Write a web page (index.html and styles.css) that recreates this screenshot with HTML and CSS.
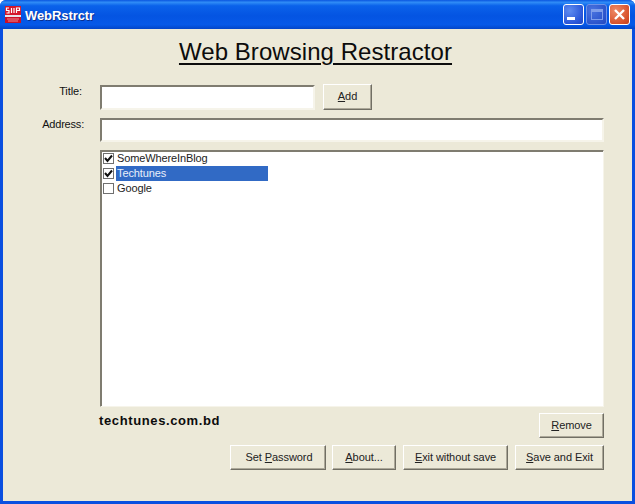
FILE: index.html
```html
<!DOCTYPE html>
<html lang="en">
<head>
<meta charset="utf-8">
<title>WebRstrctr</title>
<link rel="stylesheet" href="styles.css">
</head>
<body>
<div class="window">
  <header class="titlebar">
    <svg class="app-icon" width="16" height="17" viewBox="0 0 16 17">
      <rect x="0" y="0" width="16" height="9" fill="#d4182c"/>
      <rect x="0" y="9" width="16" height="2" fill="#e8e4ea"/>
      <rect x="0" y="11" width="16" height="6" fill="#cc1028"/>
      <path d="M4 2H1.500V4.500H4V7H1.500M6.500 2V7M9 2V7M11.500 7V2H14.500V4.500H11.500" stroke="#fff" stroke-width="1.200" fill="none"/>
      <path d="M2 13h12M3 15h10" stroke="#f08a90" stroke-width="1"/>
    </svg>
    <span class="title-text">WebRstrctr</span>
    <div class="caption-buttons">
      <div class="cap cap-min"><span class="min-glyph"></span></div>
      <div class="cap cap-max"><span class="max-glyph"></span></div>
      <div class="cap cap-close">
        <svg width="13" height="13" viewBox="0 0 13 13"><path d="M2 2l9 9M11 2l-9 9" stroke="#fff" stroke-width="2.400"/></svg>
      </div>
    </div>
  </header>
  <main class="client">
    <h1 class="heading">Web Browsing Restractor</h1>
    <div class="form-row row-title">
      <label class="label label-title">Title:</label>
      <div class="field field-title"></div>
      <button class="btn btn-add"><u>A</u>dd</button>
    </div>
    <div class="form-row row-address">
      <label class="label label-address">Address:</label>
      <div class="field field-address"></div>
    </div>
    <div class="list">
      <div class="item"><span class="check"><svg width="9" height="9" viewBox="0 0 9 9"><path d="M1 4l2.500 3L8 1.500" stroke="#111" stroke-width="2" fill="none"/></svg></span><span class="item-text">SomeWhereInBlog</span></div>
      <div class="item"><span class="check"><svg width="9" height="9" viewBox="0 0 9 9"><path d="M1 4l2.500 3L8 1.500" stroke="#111" stroke-width="2" fill="none"/></svg></span><span class="item-text selected">Techtunes</span></div>
      <div class="item"><span class="check"></span><span class="item-text">Google</span></div>
    </div>
    <div class="list-footer">
      <span class="site">techtunes.com.bd</span>
      <button class="btn btn-remove"><u>R</u>emove</button>
    </div>
    <div class="actions">
      <button class="btn btn-pass">Set <u>P</u>assword</button>
      <button class="btn btn-about"><u>A</u>bout...</button>
      <button class="btn btn-nosave"><u>E</u>xit without save</button>
      <button class="btn btn-save"><u>S</u>ave and Exit</button>
    </div>
  </main>
</div>
</body>
</html>
```
FILE: styles.css
```css
* { box-sizing: border-box; }
html, body { margin: 0; padding: 0; }
body { width: 635px; height: 504px; overflow: hidden; font-family: "Liberation Sans", Arial, sans-serif; }
.window {
  width: 635px; height: 504px; display: flex; flex-direction: column;
  background: #0a4fe0;
  border-radius: 6px 6px 0 0;
  overflow: hidden;
}
.titlebar {
  height: 29px; flex: none; display: flex; align-items: center; padding: 0 5px;
  background: linear-gradient(180deg, #0a56e0 0%, #2f8cf6 8%, #0a62ea 20%, #0454e2 55%, #0659e8 85%, #0345c8 100%);
}
.app-icon { flex: none; margin-top: 0; }
.title-text { margin-left: 4px; margin-top: 2px; color: #fff; font-size: 13px; font-weight: 700; letter-spacing: -0.08px; text-shadow: 1px 1px 0 #0a2f90; }
.caption-buttons { margin-left: auto; display: flex; gap: 2px; }
.cap {
  width: 21px; height: 21px; border: 1px solid #fff; border-radius: 3px;
  display: flex; align-items: center; justify-content: center;
}
.cap-min { background: radial-gradient(circle at 30% 30%, #5f8cf0, #2a56d8 70%, #2348c0); }
.cap-max { background: radial-gradient(circle at 30% 30%, #4a74e0, #2c55cc 70%, #2348c0); border-color: #6f93e8; }
.cap-close { background: radial-gradient(circle at 30% 30%, #ee8a66, #d8522c 70%, #c23f1e); }
.min-glyph { width: 8px; height: 3px; background: #fff; margin: 8px 6px 0 0; }
.max-glyph { width: 12px; height: 11px; border: 1px solid #7f9eea; border-top-width: 3px; }
.client {
  flex: 1; margin: 0 3px 3px; background: #ece9d8;
  padding: 0 28px 0 97px; display: flex; flex-direction: column;
  color: #111; font-size: 11px;
}
.heading {
  margin: 8px 0 0 -97px; width: 625px; height: 30px; font-size: 24px; font-weight: 400; text-align: center;
  line-height: 30px; text-decoration: underline; text-underline-offset: 3px; text-decoration-thickness: 2px;
  letter-spacing: 0.06px; color: #0c0c0c;
}
.form-row { display: flex; align-items: flex-start; }
.row-title { margin-top: 17px; height: 26px; }
.row-address { margin-top: 8px; height: 24px; }
.label { margin-left: -97px; text-align: right; flex: none; line-height: 14px; }
.label-title { width: 79px; margin-right: 18px; letter-spacing: -0.1px; }
.label-address { width: 81px; margin-right: 16px; margin-top: -1px; letter-spacing: -0.2px; }
.field {
  background: #fff; border: 2px solid; border-color: #7f7c70 #f6f4ea #f6f4ea #7f7c70;
}
.field-title { width: 215px; height: 25px; margin-top: 1px; }
.field-address { width: 504px; height: 24px; }
.btn {
  display: block; padding: 0 0 2px; margin: 0; background: #ece9d8; color: #222;
  font-family: "Liberation Sans", Arial, sans-serif; font-size: 11px; text-align: center;
  letter-spacing: -0.08px;
  border: 1px solid; border-color: #fff #716f64 #716f64 #fff;
  box-shadow: inset -1px -1px 0 #aca899;
}
.btn-add { width: 49px; height: 26px; margin-left: 8px; }
.list {
  margin-top: 8px; width: 504px; height: 257px; background: #fff; flex: none;
  border: 1px solid; border-color: #7f7c70 #f6f4ea #f6f4ea #7f7c70;
  box-shadow: inset 1px 1px 0 #7f7c70;
  padding: 0 0 0 2px;
}
.item { height: 15px; display: flex; align-items: center; }
.check { width: 11px; height: 11px; border: 1px solid #6f6f6f; background: #fff; flex: none; display: flex; align-items: center; justify-content: center; }
.item-text { margin-left: 2px; padding-left: 1px; height: 15px; line-height: 15px; width: 152px; color: #222; letter-spacing: -0.12px; }
.selected { background: #316ac5; color: #e8eefa; }
.list-footer { display: flex; justify-content: space-between; height: 25px; margin-top: 6px; flex: none; }
.site { font-weight: 700; font-size: 13px; letter-spacing: 0.62px; line-height: 16px; margin-left: -1px; color: #0c0c0c; }
.btn-remove { width: 65px; height: 25px; }
.actions { display: flex; justify-content: flex-end; gap: 7px; margin-top: 7px; flex: none; }
.actions .btn { height: 25px; }
.btn-pass { width: 96px; margin-right: -1px; padding-left: 2px; }
.btn-about { width: 64px; }
.btn-nosave { width: 105px; }
.btn-save { width: 89px; }
```
